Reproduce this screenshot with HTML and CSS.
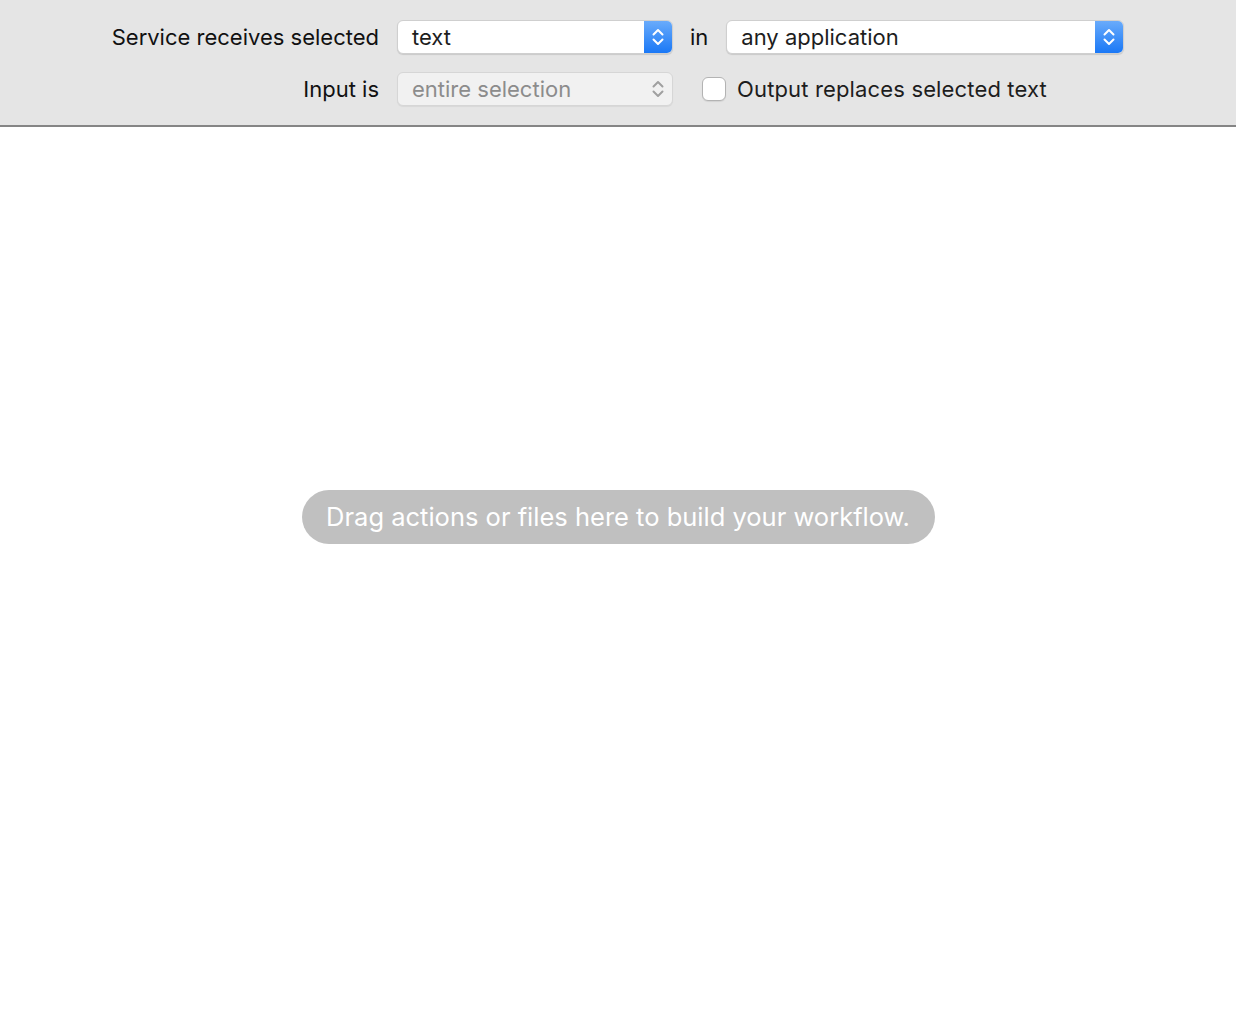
FILE: index.html
```html
<!DOCTYPE html>
<html>
<head>
<meta charset="utf-8">
<link rel="stylesheet" href="styles.css">
</head>
<body>
<header class="toolbar">
  <div class="label">Service receives selected</div>
  <div class="popup">
    <span class="popup-text">text</span>
    <span class="stepper active">
      <svg width="14" height="24" viewBox="0 0 14 24"><path d="M2.5 9.5 L7 5 L11.5 9.5 M2.5 14.5 L7 19 L11.5 14.5" fill="none" stroke="#fff" stroke-width="2" stroke-linecap="round" stroke-linejoin="round"/></svg>
    </span>
  </div>
  <div class="cell-in">
    <span class="in-label">in</span>
    <div class="popup wide">
      <span class="popup-text">any application</span>
      <span class="stepper active">
        <svg width="14" height="24" viewBox="0 0 14 24"><path d="M2.5 9.5 L7 5 L11.5 9.5 M2.5 14.5 L7 19 L11.5 14.5" fill="none" stroke="#fff" stroke-width="2" stroke-linecap="round" stroke-linejoin="round"/></svg>
      </span>
    </div>
  </div>
  <div class="label">Input is</div>
  <div class="popup disabled">
    <span class="popup-text">entire selection</span>
    <span class="stepper">
      <svg width="14" height="24" viewBox="0 0 14 24"><path d="M2.5 9.5 L7 5 L11.5 9.5 M2.5 14.5 L7 19 L11.5 14.5" fill="none" stroke="#a0a0a0" stroke-width="2" stroke-linecap="round" stroke-linejoin="round"/></svg>
    </span>
  </div>
  <div class="cell-check">
    <span class="checkbox"></span>
    <span class="check-label">Output replaces selected text</span>
  </div>
</header>
<main class="workflow">
  <div class="hint">Drag actions or files here to build your workflow.</div>
</main>
</body>
</html>
```

FILE: styles.css
```css
html, body {
  margin: 0;
  padding: 0;
  background: #ffffff;
  font-family: "Inter", "Roboto", "Liberation Sans", sans-serif;
}

.toolbar {
  display: grid;
  grid-template-columns: 379px 276px 1fr;
  grid-template-rows: 34px 34px;
  column-gap: 18px;
  row-gap: 18px;
  padding: 20px 0 19px 0;
  background: #e5e5e5;
  border-bottom: 2px solid #858585;
  align-items: center;
  box-sizing: border-box;
  height: 127px;
}

.label {
  text-align: right;
  font-size: 22px;
  color: #111;
}

.popup {
  display: flex;
  align-items: stretch;
  height: 34px;
  box-sizing: border-box;
  background: #fff;
  border: 1px solid #cfcfcf;
  border-radius: 6px;
  box-shadow: 0 1px 1px rgba(0,0,0,0.12);
  overflow: hidden;
}

.popup.wide {
  width: 398px;
}

.popup-text {
  flex: 1;
  display: flex;
  align-items: center;
  padding-left: 14px;
  font-size: 22px;
  color: #1d1d1d;
}

.stepper {
  width: 28px;
  display: flex;
  align-items: center;
  justify-content: center;
}

.stepper.active {
  background: linear-gradient(#69abfb, #1a78f6);
}

.popup.disabled {
  background: #f1f1f1;
  border-color: #d6d6d6;
  box-shadow: 0 1px 1px rgba(0,0,0,0.06);
}

.popup.disabled .popup-text {
  color: #8c8c8c;
}

.cell-in {
  display: flex;
  align-items: center;
  gap: 18px;
  padding-left: 17px;
  margin-left: -18px;
}

.in-label {
  font-size: 22px;
  color: #111;
}

.cell-check {
  display: flex;
  align-items: center;
  gap: 11px;
  margin-left: 11px;
}

.checkbox {
  width: 24px;
  height: 24px;
  box-sizing: border-box;
  background: #fff;
  border: 1px solid #b3b3b3;
  border-radius: 6px;
  box-shadow: 0 1px 1px rgba(0,0,0,0.08);
}

.check-label {
  font-size: 22px;
  letter-spacing: 0.15px;
  color: #1d1d1d;
}

.workflow {
  height: 903px;
  display: flex;
  flex-direction: column;
  align-items: center;
  padding-top: 363px;
  box-sizing: border-box;
}

.hint {
  width: 633px;
  height: 54px;
  border-radius: 27px;
  background: #c0c0c0;
  color: #fff;
  font-size: 25.5px;
  line-height: 1;
  box-sizing: border-box;
  display: flex;
  align-items: center;
  justify-content: center;
}
```
